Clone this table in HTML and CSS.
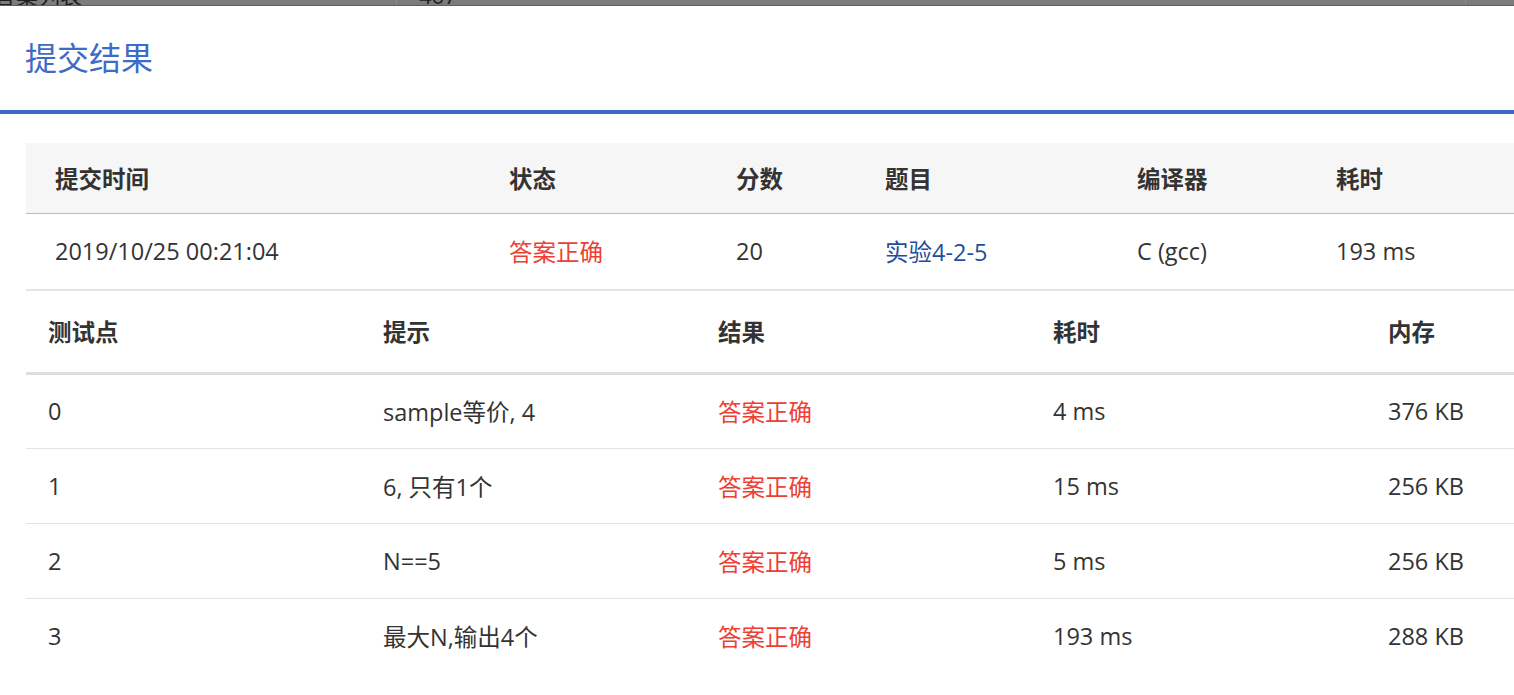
FILE: index.html
```html
<!DOCTYPE html>
<html lang="zh-CN">
<head>
<meta charset="utf-8">
<title>提交结果</title>
<link rel="stylesheet" href="styles.css">
</head>
<body>
<div class="backdrop">
  <div class="bd-cell bd-first"><span class="bd-text">答案列表</span></div>
  <div class="bd-cell bd-second"><span class="bd-text">467</span></div>
  <div class="bd-cell bd-rest"></div>
</div>
<div class="modal">
  <div class="modal-head">
    <h2 class="modal-title">提交结果</h2>
  </div>
  <div class="modal-body">
    <table class="summary">
      <colgroup>
        <col class="s-c1"><col class="s-c2"><col class="s-c3"><col class="s-c4"><col class="s-c5"><col class="s-c6">
      </colgroup>
      <thead>
        <tr><th>提交时间</th><th>状态</th><th>分数</th><th>题目</th><th>编译器</th><th>耗时</th></tr>
      </thead>
      <tbody>
        <tr>
          <td>2019/10/25 00:21:04</td>
          <td class="ok">答案正确</td>
          <td>20</td>
          <td><a class="link" href="#">实验4-2-5</a></td>
          <td>C (gcc)</td>
          <td>193 ms</td>
        </tr>
      </tbody>
    </table>
    <table class="cases">
      <colgroup>
        <col class="c-col"><col class="c-col"><col class="c-col"><col class="c-col"><col class="c-col">
      </colgroup>
      <thead>
        <tr><th>测试点</th><th>提示</th><th>结果</th><th>耗时</th><th>内存</th></tr>
      </thead>
      <tbody>
        <tr><td>0</td><td>sample等价, 4</td><td class="ok">答案正确</td><td>4 ms</td><td>376 KB</td></tr>
        <tr><td>1</td><td>6, 只有1个</td><td class="ok">答案正确</td><td>15 ms</td><td>256 KB</td></tr>
        <tr><td>2</td><td>N==5</td><td class="ok">答案正确</td><td>5 ms</td><td>256 KB</td></tr>
        <tr><td>3</td><td>最大N,输出4个</td><td class="ok">答案正确</td><td>193 ms</td><td>288 KB</td></tr>
      </tbody>
    </table>
  </div>
</div>
</body>
</html>
```

FILE: styles.css
```css
html, body {
  margin: 0;
  padding: 0;
  background: #ffffff;
  overflow: hidden;
  font-family: "Open Sans", "Noto Sans CJK SC", sans-serif;
  color: #333333;
}

.backdrop {
  height: 6px;
  display: flex;
  align-items: flex-end;
  overflow: hidden;
  background: #7c7c7c;
  border-bottom: 1px solid #5e5e5e;
  box-sizing: border-box;
}

.bd-cell {
  height: 6px;
  display: flex;
  align-items: flex-end;
}

.bd-first {
  width: 396px;
  border-right: 1px solid #8c8c8c;
}

.bd-second {
  width: 1046px;
  padding-left: 22px;
  border-right: 1px solid #8c8c8c;
}

.bd-rest {
  flex: 1;
}

.bd-text {
  font-size: 22px;
  line-height: 20px;
  color: #1f1f1f;
  white-space: nowrap;
}

.bd-first .bd-text {
  margin-left: -6px;
}

.modal {
  background: #ffffff;
}

.modal-head {
  height: 104px;
  display: flex;
  align-items: center;
  padding-left: 25px;
  border-bottom: 4px solid #3b69c5;
}

.modal-title {
  margin: 0;
  font-size: 32px;
  font-weight: 400;
  color: #3d6bc6;
  line-height: 40px;
}

.modal-body {
  padding: 29px 0 0 26px;
  overflow: hidden;
}

table {
  border-collapse: collapse;
  table-layout: fixed;
  font-size: 23.5px;
}

th, td {
  box-sizing: border-box;
  text-align: left;
  vertical-align: middle;
  white-space: nowrap;
  padding: 0;
}

th {
  font-weight: 700;
  color: #333333;
}

.summary {
  width: 1700px;
}

.s-c1 { width: 454px; }
.s-c2 { width: 227px; }
.s-c3 { width: 149px; }
.s-c4 { width: 252px; }
.s-c5 { width: 199px; }
.s-c6 { width: 419px; }

.summary th,
.summary td {
  padding-left: 29px;
}

.summary thead th {
  height: 70px;
  background: #f6f6f6;
  border-bottom: 1px solid #bcbcbc;
}

.summary tbody td {
  height: 77px;
  border-bottom: 2px solid #e4e4e4;
}

.ok {
  color: #ee3f34;
}

.link {
  color: #1d4f9c;
  text-decoration: none;
}

.cases {
  width: 1675px;
}

.c-col {
  width: 335px;
}

.cases th,
.cases td {
  padding-left: 22px;
}

.cases thead th {
  height: 82px;
  border-bottom: 3px solid #dedede;
}

.cases tbody td {
  height: 75px;
  border-bottom: 1px solid #e4e4e4;
}

.cases tbody tr:last-child td {
  border-bottom: none;
}
```
